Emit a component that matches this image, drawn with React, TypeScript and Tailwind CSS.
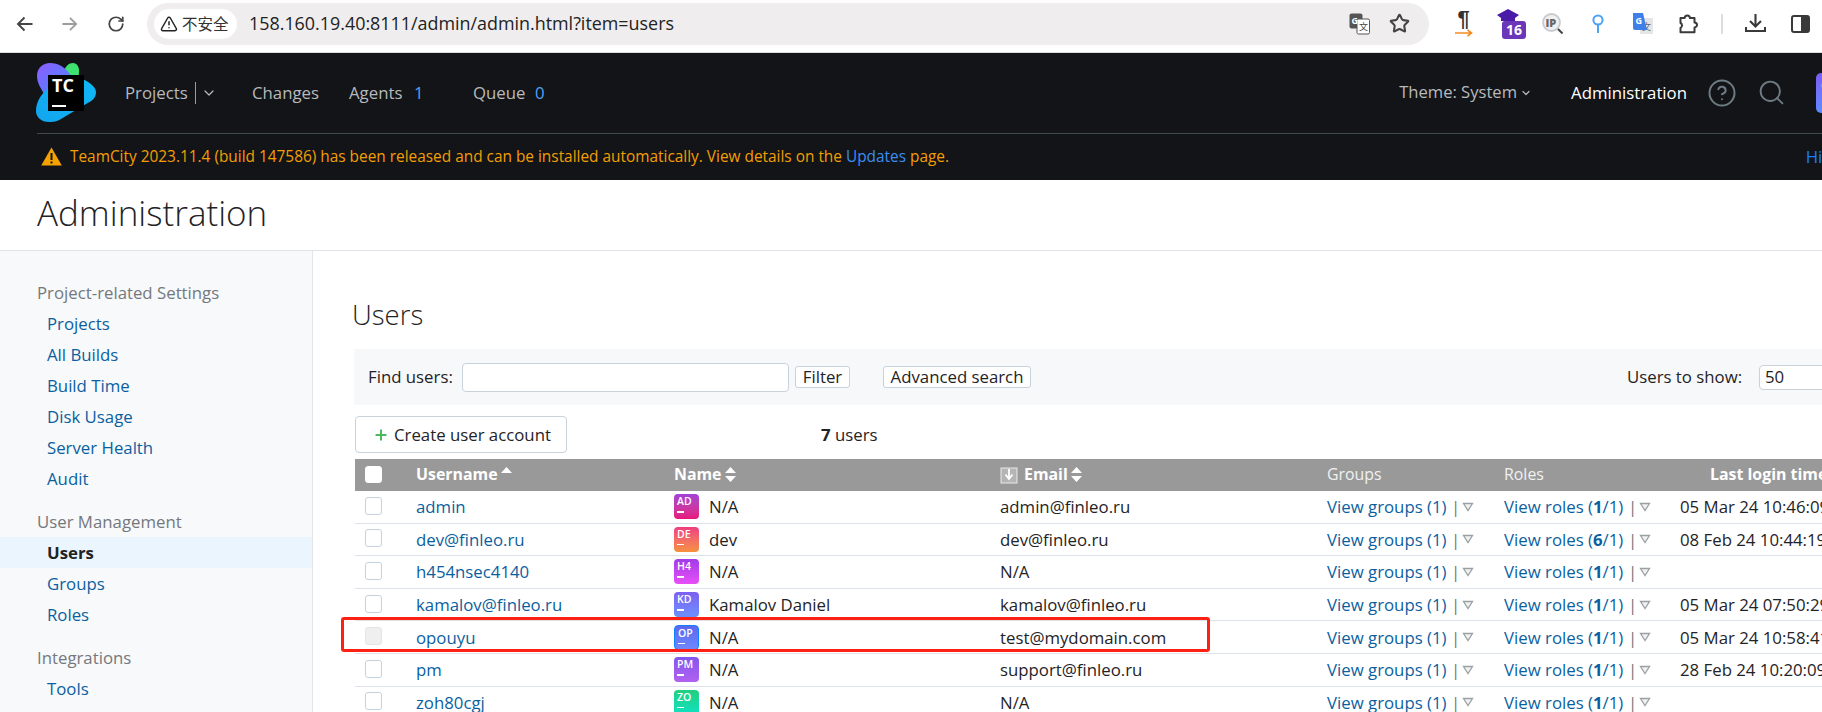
import React from "react";
import { CircleHelp, Search, Star, TriangleAlert, RotateCw, Plus, ChevronDown } from "lucide-react";

const F = "font-['Open_Sans','Noto_Sans_CJK_SC',sans-serif]";

const Tri = () => (
  <svg width="12" height="10" viewBox="0 0 12 10" className="shrink-0">
    <path d="M1.5 1.5h9L6 8.5z" fill="#f2f2f2" stroke="#9aa0a4" strokeWidth="1.3" />
  </svg>
);

const Sort = ({ only }: { only?: boolean }) => (
  <svg width="13" height="17" viewBox="0 0 13 17" className="ml-[2px] shrink-0">
    <path d="M1 7L6.5 1 12 7z" fill="#fff" />
    {!only && <path d="M1 10l5.5 6 5.5-6z" fill="#fff" />}
  </svg>
);

const Box = ({ kind }: { kind?: "head" | "off" }) => (
  <div
    className={
      kind === "head"
        ? "mb-[2px] h-[17px] w-[17px] rounded-[3px] border border-white bg-white"
        : kind === "off"
          ? "mb-[2px] h-[18px] w-[17px] rounded-[3px] border border-[#e3e5e6] bg-[#efefef]"
          : "mb-[2px] h-[18px] w-[17px] rounded-[3px] border border-[#c4d2dd] bg-white"
    }
  />
);

type U = { u: string; av: string; grad: string; name: string; mail: string; r: string; t: string; off?: boolean };
const users: U[] = [
  { u: "admin", av: "AD", grad: "from-[#a53fd6] to-[#e8107a]", name: "N/A", mail: "admin@finleo.ru", r: "1", t: "05 Mar 24 10:46:09" },
  { u: "dev@finleo.ru", av: "DE", grad: "from-[#ee3c80] to-[#f6903a]", name: "dev", mail: "dev@finleo.ru", r: "6", t: "08 Feb 24 10:44:19" },
  { u: "h454nsec4140", av: "H4", grad: "from-[#a13ae8] to-[#e94ef6]", name: "N/A", mail: "N/A", r: "1", t: "" },
  { u: "kamalov@finleo.ru", av: "KD", grad: "from-[#7c60ef] to-[#6a90ff]", name: "Kamalov Daniel", mail: "kamalov@finleo.ru", r: "1", t: "05 Mar 24 07:50:29" },
  { u: "opouyu", av: "OP", grad: "from-[#5b68ee] to-[#6f88ff]", name: "N/A", mail: "test@mydomain.com", r: "1", t: "05 Mar 24 10:58:41", off: true },
  { u: "pm", av: "PM", grad: "from-[#8356ef] to-[#b261ef]", name: "N/A", mail: "support@finleo.ru", r: "1", t: "28 Feb 24 10:20:09" },
  { u: "zoh80cgj", av: "ZO", grad: "from-[#22cf7e] to-[#0fe2c3]", name: "N/A", mail: "N/A", r: "1", t: "" },
];

const cols = "grid grid-cols-[61px_258px_326px_327px_177px_176px_300px] items-center";

const SideHead = ({ children, first }: { children: string; first?: boolean }) => (
  <div className={`${first ? "" : "mt-[12px]"} h-[31px] pl-[37px] leading-[31px] text-[#75787b]`}>{children}</div>
);
const SideItem = ({ children, on }: { children: string; on?: boolean }) => (
  <div
    className={
      on
        ? "h-[31px] bg-[#eaf5fe] pl-[47px] font-bold leading-[31px] text-[#1f2326]"
        : "h-[31px] pl-[47px] leading-[31px] text-[#0b5fa0]"
    }
  >
    {children}
  </div>
);

export default function App() {
  return (
    <div className={`${F} h-[712px] w-[1822px] overflow-hidden bg-white text-[16.8px] text-[#1f2326]`}>
      {/* browser toolbar */}
      <div className="flex h-[53px] items-center border-b border-[#dcdcdc] pb-[5px]">
        <svg width="17" height="16" viewBox="0 0 17 16" fill="none" stroke="#454545" strokeWidth="1.9" className="ml-[16px]">
          <path d="M16.5 8H2M8.5 1.5L2 8l6.5 6.5" />
        </svg>
        <svg width="16" height="16" viewBox="0 0 17 16" fill="none" stroke="#9c9c9c" strokeWidth="1.9" className="ml-[29px]">
          <path d="M0.5 8H15M8.5 1.5L15 8l-6.5 6.5" />
        </svg>
        <RotateCw size={18} strokeWidth={2.3} color="#454545" className="ml-[29px]" />
        <div className="ml-[22px] flex h-[42px] w-[1282px] items-center rounded-[21px] bg-[#efedee]">
          <div className="ml-[7px] flex h-[30px] w-[83px] shrink-0 items-center rounded-[15px] bg-white pl-[6px] text-[#333]">
            <TriangleAlert size={18} strokeWidth={2} color="#222" />
            <span className="ml-[4px] font-['Noto_Sans_CJK_SC',sans-serif] text-[15.5px]">不安全</span>
          </div>
          <span className="ml-[12px] text-[17.9px] text-[#222]">158.160.19.40:8111/admin/admin.html?item=users</span>
          <svg width="21" height="22" viewBox="0 0 21 22" className="ml-auto">
            <rect x="0.5" y="0.5" width="13" height="15" rx="2" fill="#555" />
            <rect x="8" y="6" width="12.5" height="15" rx="1.5" fill="#fff" stroke="#555" />
            <text x="2.5" y="11" fontSize="9" fontWeight="700" fill="#fff" fontFamily="Open Sans">G</text>
            <text x="10" y="17" fontSize="9" fill="#444" fontFamily="Noto Sans CJK SC">文</text>
          </svg>
          <Star size={21} strokeWidth={2.4} color="#444" className="ml-[19px] mr-[19px]" />
        </div>
        <div className="ml-[26px] flex w-[17px] flex-col items-center">
          <span className="h-[19px] font-['Liberation_Sans',sans-serif] text-[22px] font-bold leading-[18px] text-[#333]">¶</span>
          <svg width="18" height="8" viewBox="0 0 18 8" fill="none" stroke="#f58a1f" strokeWidth="1.7"><path d="M0 4h16M12.500 0.800L16.500 4l-4 3.200" /></svg>
        </div>
        <div className="relative ml-[25px] h-[30px] w-[29px]">
          <svg width="22" height="14" viewBox="0 0 22 14"><path d="M11 0l11 6-4 3v3H4V9L0 6z" fill="#4a1ba8" /></svg>
          <div className="absolute bottom-0 right-0 h-[18px] w-[24px] rounded-[3px] bg-[#6b36b8] text-center text-[14px] font-bold leading-[18px] text-white">16</div>
        </div>
        <svg width="22" height="22" viewBox="0 0 22 22" className="ml-[16px]">
          <circle cx="9.5" cy="9.5" r="8.5" fill="#f0f0f0" stroke="#c6ccd2" strokeWidth="1.8" />
          <text x="3.400" y="13.500" fontSize="11" fontWeight="800" fill="#666" fontFamily="Open Sans">IP</text>
          <path d="M16 16l4.5 4.5" stroke="#444" strokeWidth="2" />
        </svg>
        <svg width="12" height="19" viewBox="0 0 12 19" fill="none" stroke="#4da3f5" strokeWidth="2" className="ml-[28px]">
          <circle cx="6" cy="6" r="4.6" /><path d="M6 10.5V19" />
        </svg>
        <svg width="21" height="22" viewBox="0 0 21 22" className="ml-[28px]">
          <rect x="8" y="5" width="13" height="16" fill="#e3e5e6" />
          <text x="10" y="17" fontSize="9" fill="#666" fontFamily="Noto Sans CJK SC">文</text>
          <path d="M1 0h10l4 17H3a2 2 0 0 1-2-2z" fill="#3f7fe8" />
          <text x="3.6" y="11" fontSize="9" fontWeight="700" fill="#fff" fontFamily="Open Sans">G</text>
        </svg>
        <svg width="21" height="20" viewBox="0 0 21 20" fill="none" stroke="#3a3a3a" strokeWidth="2" className="ml-[25px]">
          <path d="M2.5 4h4.2a2.6 2.6 0 0 1 5.2 0h4.6v4.4a2.5 2.5 0 0 1 0 5v4.8H2.5v-4.2a2.7 2.7 0 0 0 1.5-2.6A2.7 2.7 0 0 0 2.5 9z" strokeLinejoin="round" />
        </svg>
        <div className="ml-[22px] h-[20px] w-[2px] bg-[#dcdde0]" />
        <svg width="21" height="19" viewBox="0 0 21 19" fill="none" stroke="#3a3a3a" strokeWidth="2.1" className="ml-[22px]">
          <path d="M10.5 0v11.5M5 7l5.5 5.5L16 7M1 13v4h19v-4" />
        </svg>
        <svg width="19" height="18" viewBox="0 0 19 18" className="ml-[25px]">
          <rect x="1" y="1" width="17" height="16" rx="2" fill="#fff" stroke="#3a3a3a" strokeWidth="2" />
          <rect x="10" y="1" width="8" height="16" fill="#3a3a3a" />
        </svg>
      </div>

      {/* TeamCity header */}
      <div className="h-[127px] bg-[#131417]">
        <div className="ml-[37px] flex h-[81px] items-center border-b border-[#3f4a52] pb-[1px] text-[#b7babd]">
          <svg width="60" height="61" viewBox="0 0 60 61" className="ml-[-1px] shrink-0">
            <defs>
              <linearGradient id="pu" x1="0" y1="0" x2="1" y2="1"><stop offset="0" stopColor="#8f5cff" /><stop offset="1" stopColor="#3f8cff" /></linearGradient>
              <linearGradient id="cy" x1="0" y1="1" x2="1" y2="0"><stop offset="0" stopColor="#12a5ee" /><stop offset="1" stopColor="#10b8f6" /></linearGradient>
            </defs>
            <path d="M27 12C29 4 33 1 37 1c4 0 6.500 4 6 9l-1 12H27z" fill="#3ee36f" />
            <path d="M1 14C1 6 7 1 14 1c8 0 16 4 22 14l-4 17L8 32C5 26 1 21 1 14z" fill="url(#pu)" />
            <path d="M0 49c0-9 5-16 10-21l34-12c6 2 16 8 16 14 0 6-4 9-10 12L25 57c-5 3-9 3-12 3C5 60 0 55 0 49z" fill="url(#cy)" />
            <rect x="12" y="13" width="36" height="36" fill="#000" />
            <text x="16" y="30" fontSize="18" fontWeight="700" fill="#fff" fontFamily="Open Sans">TC</text>
            <rect x="16" y="43" width="14" height="2" fill="#fff" />
          </svg>
          <span className="ml-[29px] w-[70px] shrink-0">Projects</span>
          <span className="h-[22px] w-px shrink-0 bg-[#9a9da0]" />
          <ChevronDown size={16} strokeWidth={1.8} className="ml-[5px] shrink-0" />
          <span className="ml-[35px] w-[97px] shrink-0">Changes</span>
          <span className="w-[65px] shrink-0">Agents</span>
          <span className="w-[59px] shrink-0 text-[#4ea2f5]">1</span>
          <span className="w-[62px] shrink-0">Queue</span>
          <span className="text-[#4ea2f5]">0</span>
          <span className="ml-auto text-[16.6px]">Theme: System</span>
          <ChevronDown size={12} strokeWidth={2.4} className="ml-[3px] shrink-0" />
          <span className="ml-[39px] text-white">Administration</span>
          <CircleHelp size={30} strokeWidth={1.6} color="#6d7b83" className="ml-[20px] shrink-0" />
          <Search size={29} strokeWidth={1.6} color="#6d7b83" className="ml-[20px] shrink-0" />
          <div className="ml-[30px] mr-[-24px] h-[40px] w-[30px] shrink-0 overflow-hidden rounded-[5px] bg-linear-to-b from-[#7a5cf2] to-[#5d8bff] pl-[5px] text-[13px] font-bold leading-[24px] text-white">OP</div>
        </div>
        <div className="flex h-[45px] items-center pl-[41px] text-[15.4px] text-[#f29f05]">
          <svg width="21" height="19" viewBox="0 0 21 19" className="shrink-0">
            <path d="M10.500 0.500L20.800 18.500H0.200z" fill="#f3a200" />
            <path d="M9.500 6h2v7h-2zM9.500 14.500h2v2h-2z" fill="#131417" />
          </svg>
          <span className="ml-[8px]">
            TeamCity 2023.11.4 (build 147586) has been released and can be installed automatically. View details on the{" "}
            <span className="text-[#3b8ef0]">Updates</span> page.
          </span>
          <span className="ml-auto mr-[-20px] text-[16.8px] text-[#167dff]">Hide</span>
        </div>
      </div>

      {/* title */}
      <div className="flex h-[71px] items-center border-b border-[#dfe3e8] pl-[37px] text-[35px] font-light text-[#1f2326]">
        <span className="mt-[-3px]">Administration</span>
      </div>

      <div className="flex">
        {/* sidebar */}
        <div className="h-[461px] w-[313px] shrink-0 border-r border-[#e2e6ea] bg-[#f7f9fb] pt-[26px]">
          <SideHead first>Project-related Settings</SideHead>
          <SideItem>Projects</SideItem>
          <SideItem>All Builds</SideItem>
          <SideItem>Build Time</SideItem>
          <SideItem>Disk Usage</SideItem>
          <SideItem>Server Health</SideItem>
          <SideItem>Audit</SideItem>
          <SideHead>User Management</SideHead>
          <SideItem on>Users</SideItem>
          <SideItem>Groups</SideItem>
          <SideItem>Roles</SideItem>
          <SideHead>Integrations</SideHead>
          <SideItem>Tools</SideItem>
        </div>

        {/* content */}
        <div className="min-w-0 flex-1 pl-[41px]">
          <div className="ml-[-2px] pt-[48px] text-[27.5px] font-light leading-[32px] text-[#1f2326]">Users</div>
          <div className="mt-[18px] flex h-[56px] items-center bg-[#f7f8fa] pl-[14px]">
            <span className="w-[94px] shrink-0">Find users:</span>
            <div className="h-[29px] w-[327px] shrink-0 rounded-[4px] border border-[#c7d2db] bg-white" />
            <div className="ml-[6px] flex h-[22px] w-[55px] shrink-0 items-center justify-center rounded-[3px] border border-[#c7d2db] bg-white">Filter</div>
            <div className="ml-[33px] flex h-[22px] w-[148px] shrink-0 items-center justify-center rounded-[3px] border border-[#c7d2db] bg-white">Advanced search</div>
            <span className="ml-[596px] w-[132px] shrink-0">Users to show:</span>
            <div className="flex h-[25px] w-[100px] shrink-0 items-center rounded-[4px] border border-[#c7d2db] bg-white pl-[5px]">50</div>
          </div>
          <div className="mt-[11px] flex h-[37px] items-center pl-[1px]">
            <div className="flex h-[37px] w-[212px] shrink-0 items-center rounded-[4px] border border-[#c7d2db] bg-white pl-[17px]">
              <Plus size={16} strokeWidth={3} color="#4cb860" />
              <span className="ml-[5px]">Create user account</span>
            </div>
            <span className="ml-[254px]"><b>7</b> users</span>
          </div>

          <div className="mt-[6px] w-[1500px] pl-[1px]">
            <div className={`${cols} h-[32px] bg-[#999999] text-[15.9px] text-white`}>
              <div className="pl-[10px]"><Box kind="head" /></div>
              <div className="flex items-center font-bold">Username<Sort only /></div>
              <div className="flex items-center font-bold">Name<Sort /></div>
              <div className="flex items-center font-bold">
                <svg width="18" height="18" viewBox="0 0 18 18" className="mr-[6px] shrink-0">
                  <rect x="1" y="2" width="16" height="15" fill="#b5b5b5" stroke="#e9e9e9" />
                  <path d="M9 3v9M5.500 8.500L9 13l3.500-4.500" stroke="#fff" strokeWidth="1.800" fill="none" />
                </svg>
                Email<Sort />
              </div>
              <div className="text-[#f1f1f1]">Groups</div>
              <div className="text-[#f1f1f1]">Roles</div>
              <div className="pl-[30px] font-bold">Last login time</div>
            </div>
            {users.map((r) => (
              <div key={r.u} className={`${cols} relative h-[32.600px] border-b border-[#dde3e8]`}>
                <div className="pl-[10px]"><Box kind={r.off ? "off" : undefined} /></div>
                <div className="text-[#0b5fa0]">{r.u}</div>
                <div className="flex items-center">
                  <div
                    className={`${r.off ? "border-[1.5px] border-[#1480ff]" : ""} flex h-[25px] w-[25px] shrink-0 flex-col rounded-[4px] bg-linear-to-b ${r.grad} pl-[3px] text-[10.500px] font-semibold leading-[15px] text-white`}
                  >
                    {r.av}
                    <span className="mt-[2px] h-[1.500px] w-[7px] bg-white" />
                  </div>
                  <span className="ml-[10px]">{r.name}</span>
                </div>
                <div>{r.mail}</div>
                <div className="flex items-center text-[#0b5fa0]">
                  <span className="w-[124px] shrink-0">View groups (1)</span>
                  <span className="text-[#777]">|</span>
                  <span className="ml-[2px]"><Tri /></span>
                </div>
                <div className="flex items-center text-[#0b5fa0]">
                  <span className="w-[124px] shrink-0">View roles (<b>{r.r}</b>/1)</span>
                  <span className="text-[#777]">|</span>
                  <span className="ml-[2px]"><Tri /></span>
                </div>
                <div>{r.t}</div>
                {r.off && (
                  <div className="pointer-events-none absolute left-[-14px] top-[-4px] h-[35px] w-[869px] rounded-[3px] border-[3px] border-[#ff2015]" />
                )}
              </div>
            ))}
          </div>
        </div>
      </div>
    </div>
  );
}
